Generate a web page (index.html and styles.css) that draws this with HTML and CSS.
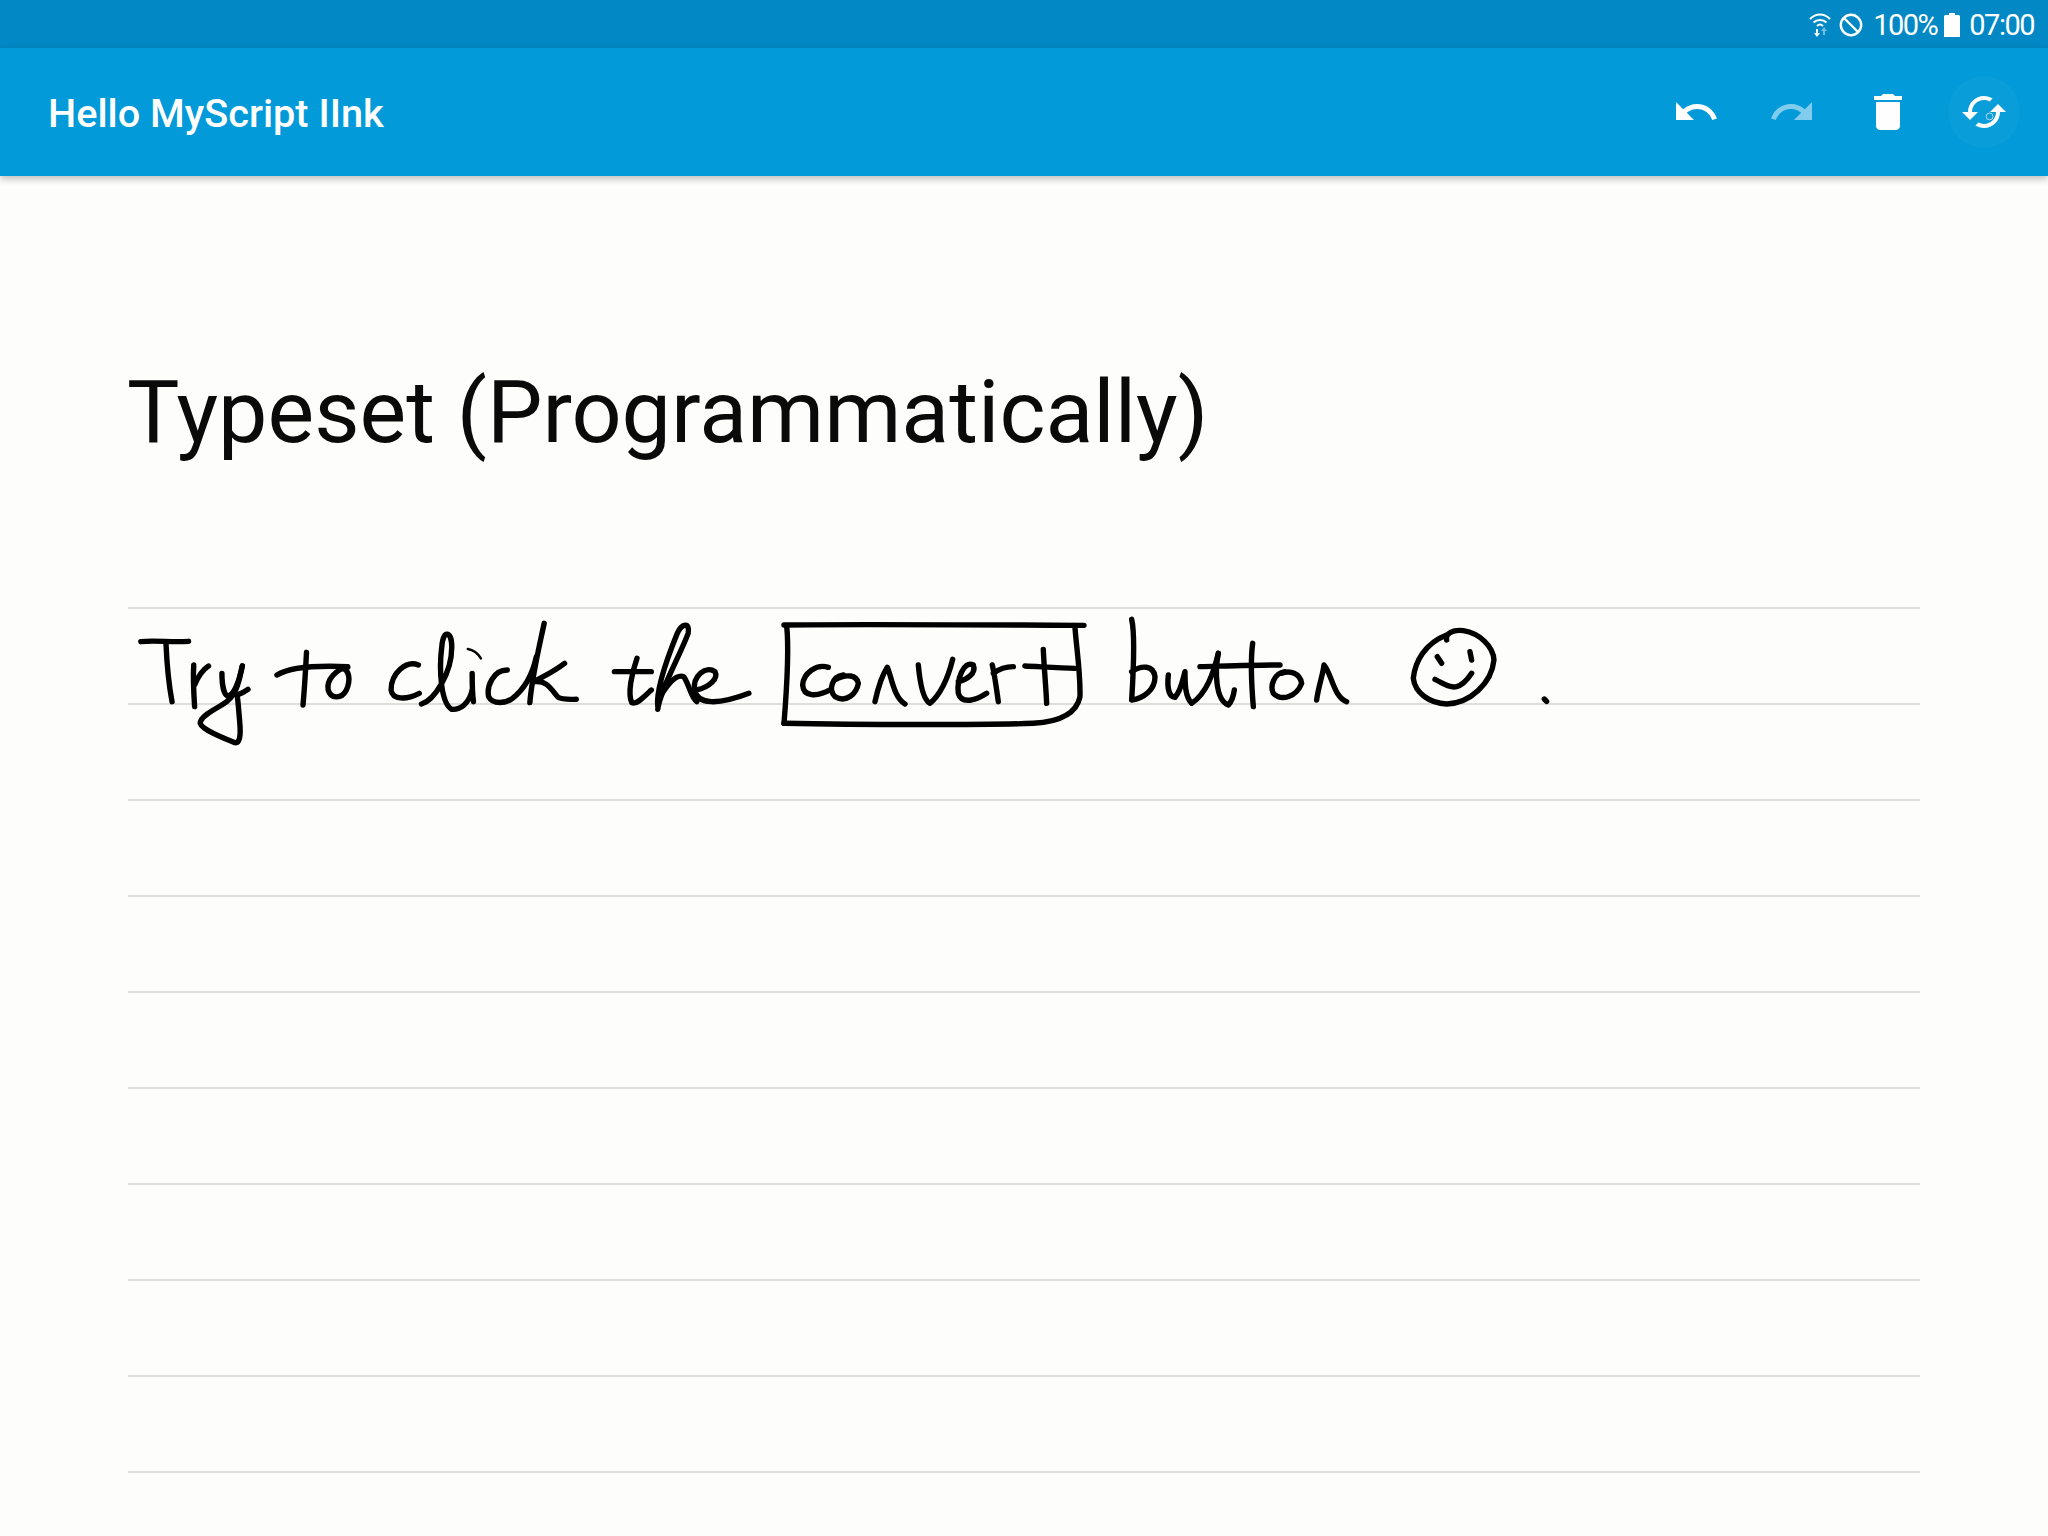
FILE: index.html
```html
<!DOCTYPE html>
<html lang="en">
<head>
    <meta charset="UTF-8">
    <meta name="viewport" content="width=device-width, initial-scale=1.0">
    <title>Hello MyScript IInk</title>
    <link rel="stylesheet" href="styles.css">
</head>
<body>
    <div class="status-bar">
        <svg class="status-wifi" viewBox="0 0 22 24" width="22" height="24">
            <path d="M1 6 C7 0 15 0 21 6" class="wifi-arc"/>
            <path d="M4.5 9.5 C8 6 14 6 17.5 9.5" class="wifi-arc"/>
            <path d="M8 13 C10 11 12 11 14 13" class="wifi-arc"/>
            <path d="M7 16 h2 v4 h2 l-3 4 l-3 -4 h2z" fill="#fff"/>
            <path d="M15 14 l3 4 h-2 v4 h-2 v-4 h-2z" fill="#fff" opacity="0.45"/>
        </svg>
        <svg class="status-block" viewBox="0 0 24 24" width="24" height="24">
            <circle cx="12" cy="12" r="10.2" fill="none" stroke="#fff" stroke-width="2.4"/>
            <path d="M5 5 L19 19" stroke="#fff" stroke-width="2.4"/>
        </svg>
        <span class="status-text">100%</span>
        <svg class="status-battery" viewBox="0 0 16 24" width="16" height="24">
            <path d="M5 0 h6 v2 h3.500 a1.500 1.500 0 0 1 1.500 1.500 V24 H0 V3.500 A1.500 1.500 0 0 1 1.500 2 H5z" fill="#fff"/>
        </svg>
        <span class="status-text">07:00</span>
    </div>

    <header class="toolbar">
        <h1 class="toolbar-title">Hello MyScript IInk</h1>
        <div class="toolbar-actions">
            <button class="action">
                <svg viewBox="0 0 24 24" width="48" height="48"><path d="M12.5 8c-2.65 0-5.05.99-6.9 2.6L2 7v9h9l-3.62-3.62c1.39-1.16 3.16-1.88 5.12-1.88 3.54 0 6.55 2.31 7.6 5.5l2.37-.78C21.08 11.03 17.15 8 12.5 8z"/></svg>
            </button>
            <button class="action action-disabled">
                <svg viewBox="0 0 24 24" width="48" height="48"><path d="M18.4 10.6C16.55 8.99 14.15 8 11.5 8c-4.65 0-8.58 3.03-9.96 7.22L3.9 16c1.05-3.19 4.05-5.5 7.6-5.5 1.95 0 3.73.72 5.12 1.88L13 16h9V7l-3.6 3.6z"/></svg>
            </button>
            <button class="action">
                <svg viewBox="0 0 24 24" width="48" height="48"><path d="M6 19c0 1.100.9 2 2 2h8c1.100 0 2-.9 2-2V7H6v12zM19 4h-3.500l-1-1h-5l-1 1H5v2h14V4z"/></svg>
            </button>
            <button class="action action-pressed">
                <svg viewBox="0 0 24 24" width="48" height="48">
                    <path d="M19 8l-4 4h3c0 3.310-2.690 6-6 6-1.010 0-1.970-.25-2.800-.7l-1.460 1.460C8.970 19.540 10.430 20 12 20c4.420 0 8-3.580 8-8h3l-4-4zM6 12c0-3.310 2.690-6 6-6 1.010 0 1.970.25 2.800.7l1.460-1.460C15.030 4.460 13.570 4 12 4c-4.420 0-8 3.580-8 8H1l4 4 4-4H6z"/>
                    <circle cx="14.800" cy="14.200" r="1.700" class="touch-dot"/>
                </svg>
            </button>
        </div>
    </header>

    <main class="editor">
        <h2 class="editor-title">Typeset (Programmatically)</h2>
        <div class="rules">
            <div class="rule"></div>
            <div class="rule"></div>
            <div class="rule"></div>
            <div class="rule"></div>
            <div class="rule"></div>
            <div class="rule"></div>
            <div class="rule"></div>
            <div class="rule"></div>
            <div class="rule"></div>
            <div class="rule"></div>
        </div>

        <!-- freehand ink drawn on the canvas -->
        <svg class="ink" viewBox="0 0 2048 1360" width="2048" height="1360">
            <g transform="translate(120 414) scale(0.4337 0.3333)">
                <path d="M48 155 C80 150 120 158 158 154"/>
                <path d="M106 160 C108 220 112 280 120 335"/>
                <path d="M170 225 C168 270 170 310 172 350 M172 285 C180 260 192 238 204 228"/>
                <path d="M235 250 C235 285 240 318 250 318 C265 310 275 270 282 228"/>
                <path d="M282 228 C275 270 270 320 235 345 C215 360 185 380 185 400 C190 420 240 445 265 458 C280 460 278 420 275 380 C273 350 272 330 270 315 C280 310 290 303 295 298"/>
                <path d="M362 255 C390 232 440 225 525 230"/>
                <path d="M430 187 C428 240 425 300 422 345"/>
                <path d="M525 232 C500 235 475 270 480 300 C485 325 510 330 522 300 C532 270 530 240 510 232"/>
                <path d="M688 225 C660 210 625 250 625 300 C628 330 660 330 690 310"/>
                <path d="M695 342 C725 330 765 250 765 170 C765 125 745 115 742 170 C735 240 740 340 765 358 C785 360 805 340 812 300"/>
                <path d="M812 250 C812 290 812 310 815 335"/>
                <path d="M802 177 C815 180 825 190 832 205" class="ink-thin"/>
                <path d="M893 240 C860 240 845 290 850 320 C860 345 890 340 905 325 C930 300 950 260 960 200"/>
                <path d="M978 100 C965 180 950 260 945 338"/>
                <path d="M1025 220 C1000 245 975 260 955 275 C985 270 995 300 1010 322 C1020 330 1040 328 1052 328"/>
                <path d="M1140 245 C1170 245 1200 245 1225 245"/>
                <path d="M1192 205 C1180 250 1170 310 1180 338 C1190 345 1205 325 1225 300"/>
                <path d="M1240 358 C1245 300 1290 200 1310 130 C1315 95 1295 100 1285 130 C1260 210 1235 300 1240 350"/>
                <path d="M1245 320 C1260 290 1280 250 1300 260 C1315 290 1315 320 1330 335"/>
                <path d="M1330 300 C1360 290 1380 265 1372 245 C1350 225 1320 260 1325 300 C1330 345 1380 345 1450 310"/>
            </g>
            <g transform="translate(760 414) scale(0.3333)">
                <path d="M72 105 C300 102 700 105 972 106"/>
                <path d="M80 108 C88 180 80 300 72 400"/>
                <path d="M72 400 C300 405 700 405 820 400 C900 395 950 370 960 320 C962 250 950 180 945 112"/>
                <path d="M205 232 C170 220 130 250 128 285 C130 320 170 322 210 300"/>
                <path d="M250 255 C215 260 205 300 225 320 C260 340 290 310 295 280 C290 255 260 250 225 270"/>
                <path d="M345 335 C355 290 370 250 382 232 C395 260 400 320 435 342"/>
                <path d="M475 225 C480 280 490 330 510 340 C545 310 565 260 578 208"/>
                <path d="M595 275 C620 270 650 250 640 225 C610 210 590 270 595 310 C605 345 650 330 680 310"/>
                <path d="M697 225 C705 260 710 300 715 335 M700 250 C720 235 740 230 760 230"/>
                <path d="M795 228 C840 230 900 235 945 235"/>
                <path d="M850 178 C852 230 858 290 860 340"/>
            </g>
            <g transform="translate(1100 414) scale(0.3333)">
                <path d="M95 88 C105 130 100 250 95 330 C130 325 165 300 165 260 C160 225 125 225 95 245"/>
                <path d="M205 255 C200 300 210 320 225 322 C245 300 250 260 255 245 C255 280 255 320 275 340 C320 310 340 250 355 190"/>
                <path d="M355 190 C345 240 345 330 385 345 C395 335 400 320 403 300"/>
                <path d="M300 230 C380 228 470 225 540 225"/>
                <path d="M458 160 C450 220 455 290 460 350"/>
                <path d="M555 245 C520 250 510 290 520 310 C545 335 590 320 605 280 C600 250 570 240 545 250"/>
                <path d="M650 330 C655 290 670 250 672 225 C695 250 700 320 740 335"/>
                <path d="M1040 150 C1035 130 1060 118 1090 122 C1140 130 1180 170 1182 210 C1175 280 1110 340 1040 342 C990 340 945 310 940 265 C945 215 975 160 1040 135"/>
                <path d="M1012 200 L1025 220"/>
                <path d="M1110 185 L1115 210"/>
                <path d="M1005 268 C1030 280 1050 295 1070 290 C1090 285 1105 265 1115 250"/>
                <path d="M1333 327 L1340 334"/>
            </g>
        </svg>
    </main>
</body>
</html>
```

FILE: styles.css
```css
* {
    box-sizing: border-box;
}
body {
    margin: 0;
    height: 1536px;
    overflow: hidden;
    font-family: Roboto, sans-serif;
    background-color: #fdfdfb;
}
.status-bar {
    display: flex;
    align-items: center;
    justify-content: flex-end;
    height: 48px;
    padding: 2px 14px 0 0;
    background-color: #0288c4;
    color: #fff;
}
.status-text {
    font-size: 29px;
    letter-spacing: -1.5px;
    line-height: 46px;
}
.status-wifi {
    margin-right: 8px;
}
.wifi-arc {
    fill: none;
    stroke: #fff;
    stroke-width: 2;
}
.status-block {
    margin-right: 10px;
}
.status-battery {
    margin: 0 9px 0 7px;
}
.toolbar {
    position: relative;
    display: flex;
    align-items: center;
    justify-content: space-between;
    height: 128px;
    padding: 0 16px 0 48px;
    background-color: #029ad9;
    box-shadow: 0 3px 7px rgba(0, 0, 0, 0.25);
}
.toolbar-title {
    margin: 0;
    padding-top: 3px;
    font-size: 39.7px;
    font-weight: 500;
    color: #fff;
}
.toolbar-actions {
    display: flex;
}
.action {
    display: flex;
    align-items: center;
    justify-content: center;
    width: 96px;
    height: 96px;
    padding: 0;
    border: none;
    background: none;
    fill: #fff;
}
.action-disabled svg {
    opacity: 0.5;
}
.action-pressed svg {
    box-sizing: content-box;
    padding: 12px;
    border-radius: 50%;
    background-color: rgba(255, 255, 255, 0.03);
}
.touch-dot {
    fill: none;
    stroke: #b5d9ea;
    stroke-width: 0.5;
}
.editor {
    position: relative;
    padding: 186px 127px 0;
}
.editor-title {
    margin: 0;
    height: 245px;
    font-size: 88px;
    font-weight: 400;
    line-height: 100px;
    color: #0a0a0a;
}
.rules {
    margin: 0 1px;
}
.rule {
    height: 96px;
    border-top: 2px solid #dededa;
}
.ink {
    position: absolute;
    top: 0;
    left: 0;
}
.ink path {
    fill: none;
    stroke: #000;
    stroke-width: 5.4px;
    stroke-linecap: round;
    stroke-linejoin: round;
    vector-effect: non-scaling-stroke;
}
.ink .ink-thin {
    stroke-width: 2.500px;
}
```
